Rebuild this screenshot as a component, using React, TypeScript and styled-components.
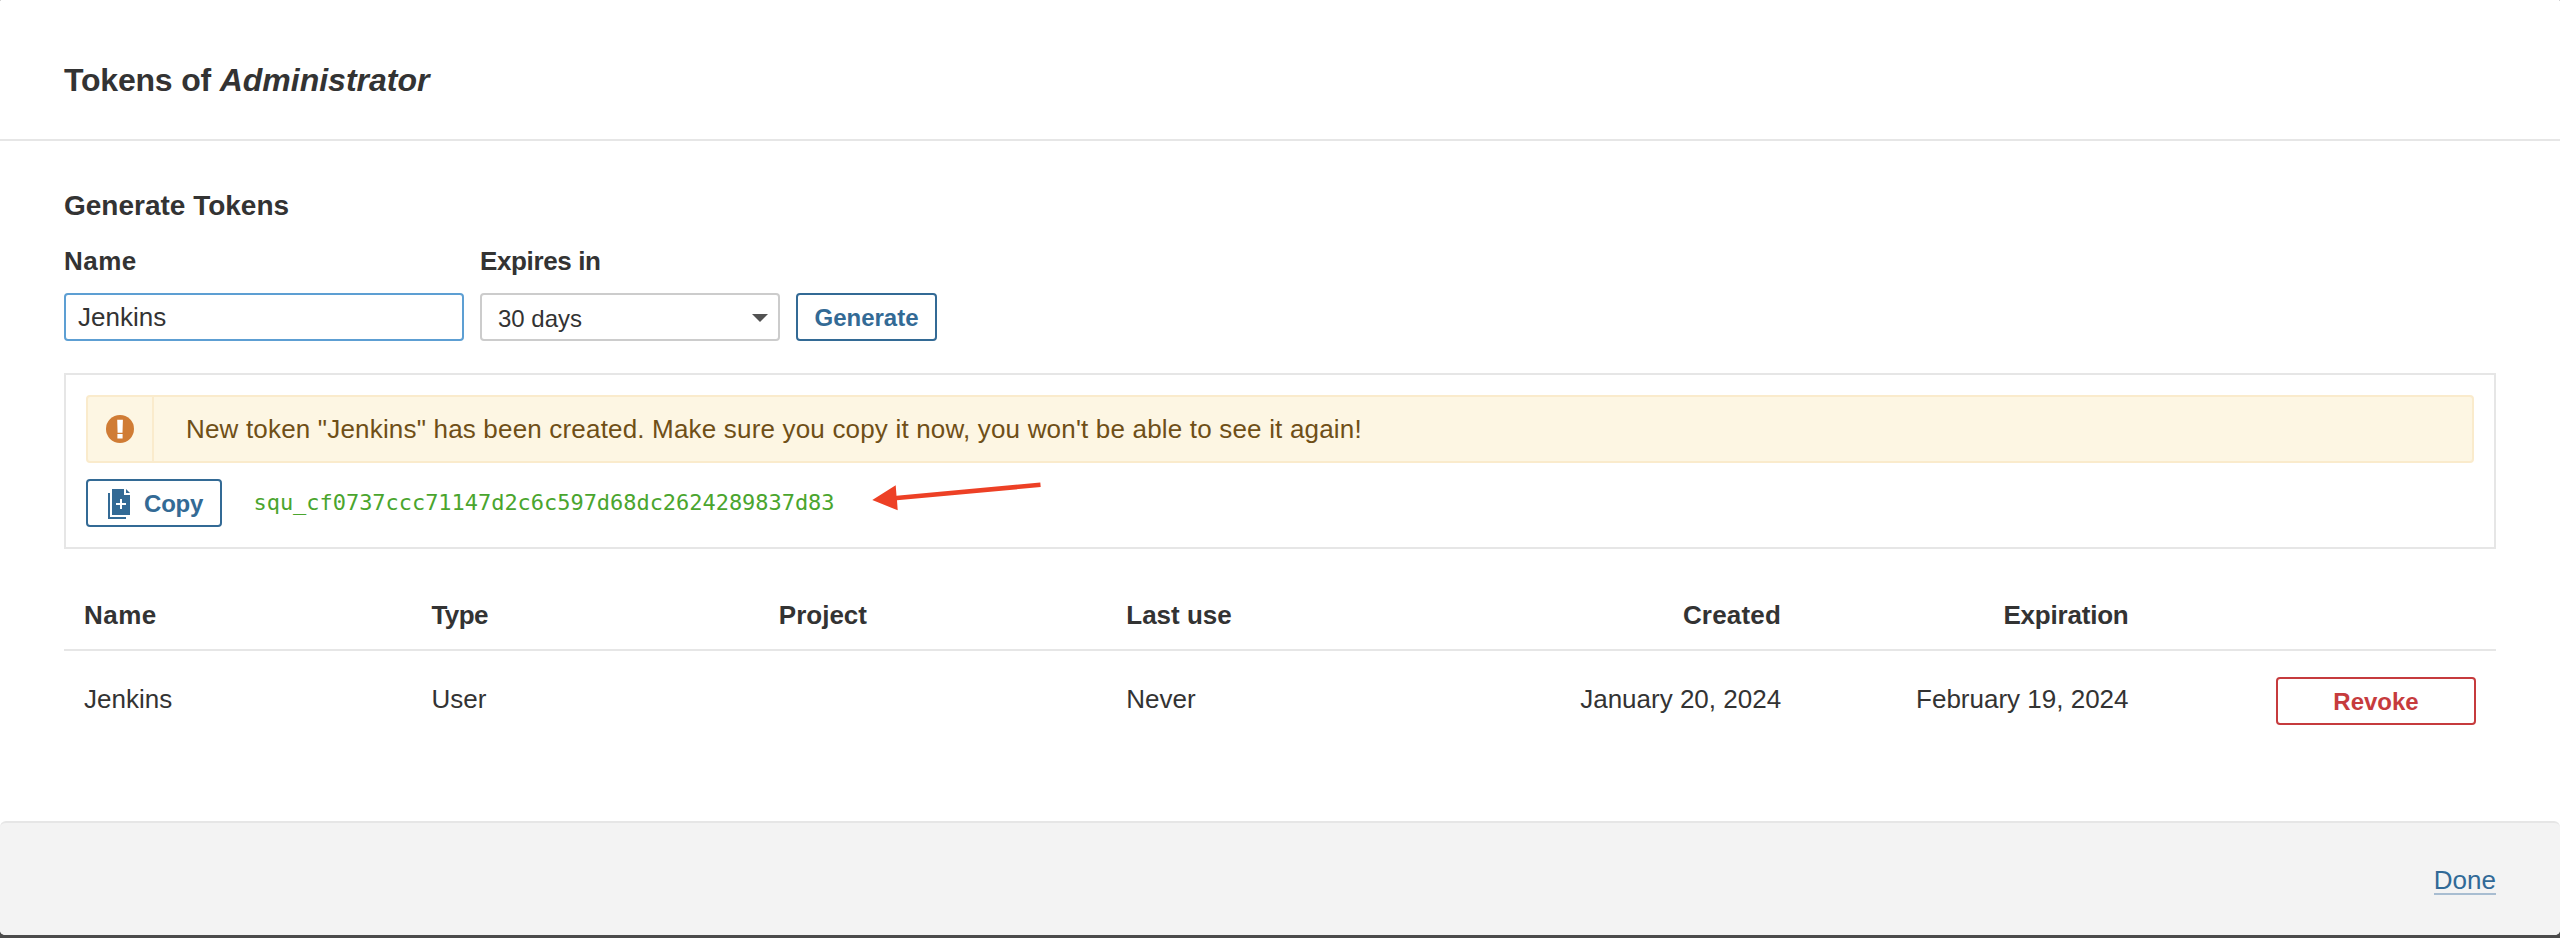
import React from "react";
import styled, { createGlobalStyle } from "styled-components";

const GlobalStyle = createGlobalStyle`
  *, *::before, *::after { box-sizing: border-box; }
  body {
    margin: 0;
    background: #4b4b4b;
    color: #333;
    font-family: "Liberation Sans", Arial, sans-serif;
    font-size: 26px;
    line-height: 30px;
  }
  button, input { font-family: inherit; margin: 0; }
`;

const Dialog = styled.div`
  display: flex;
  flex-direction: column;
  height: 935px;
  margin-bottom: 3px;
  background: #fff;
  border-radius: 1px 1px 5px 5px;
  overflow: hidden;
`;

const Header = styled.header`
  height: 141px;
  padding: 62px 64px 0;
  border-bottom: 2px solid #e6e6e6;
`;

const Title = styled.h1`
  margin: 0;
  font-size: 32px;
  line-height: 36px;
  letter-spacing: -0.2px;

  em { letter-spacing: 0; }
`;

const Body = styled.main`
  flex: 1;
  padding: 49px 64px 0;
`;

const SectionTitle = styled.h2`
  margin: 0 0 25px;
  font-size: 28px;
  line-height: 31px;
`;

const Form = styled.form`
  display: flex;
  align-items: flex-end;
  gap: 16px;
`;

const Field = styled.div<{ $width: number }>`
  display: flex;
  flex-direction: column;
  gap: 17px;
  width: ${(p) => p.$width}px;
`;

const Label = styled.label<{ $tracking: number }>`
  font-weight: bold;
  letter-spacing: ${(p) => p.$tracking}px;
`;

const TextInput = styled.input`
  width: 100%;
  height: 48px;
  padding: 0 12px;
  border: 2px solid #5d9fd3;
  border-radius: 4px;
  outline: none;
  background: #fff;
  color: #333;
  font-size: 26px;
  line-height: 44px;
`;

const Select = styled.div`
  display: flex;
  justify-content: space-between;
  height: 48px;
  padding: 3px 10px 0 16px;
  border: 2px solid #ccc;
  border-radius: 4px;
  font-size: 24px;
  line-height: 41px;
`;

const Caret = styled.span`
  width: 0;
  height: 0;
  margin-top: 16px;
  border: 8px solid transparent;
  border-top-color: #525252;
  border-bottom-width: 0;
`;

const Button = styled.button<{ $color: string; $width: number; $tracking?: number }>`
  display: flex;
  flex-shrink: 0;
  justify-content: center;
  gap: 14px;
  width: ${(p) => p.$width}px;
  height: 48px;
  padding: 1px 0 0;
  border: 2px solid ${(p) => p.$color};
  border-radius: 4px;
  background: #fff;
  color: ${(p) => p.$color};
  font-size: 24px;
  font-weight: bold;
  line-height: 43px;
  letter-spacing: ${(p) => p.$tracking ?? 0}px;
`;

const CopyButton = styled(Button)`
  justify-content: flex-start;
  padding-left: 20px;
`;

const ResultBox = styled.section`
  display: flex;
  flex-direction: column;
  gap: 16px;
  margin-top: 32px;
  padding: 20px;
  border: 2px solid #e6e6e6;
`;

const Alert = styled.div`
  display: flex;
  height: 68px;
  border: 2px solid #faebcc;
  border-radius: 4px;
  background: #fdf6e3;
  color: #6f4f17;
`;

const AlertIcon = styled.div`
  display: flex;
  align-items: center;
  justify-content: center;
  width: 66px;
  border-right: 2px solid #faebcc;
`;

const AlertText = styled.div`
  padding-left: 32px;
  line-height: 64px;
  letter-spacing: 0.18px;
`;

const TokenRow = styled.div`
  position: relative;
  display: flex;
`;

const Token = styled.code`
  margin-left: 31.5px;
  color: #4aa52e;
  font-family: "DejaVu Sans Mono", Menlo, monospace;
  font-size: 22px;
  line-height: 47px;
  letter-spacing: -0.04px;
`;

const Arrow = styled.svg`
  position: absolute;
  left: 784px;
  top: 1px;
`;

const CopyGlyph = styled.svg`
  margin-top: 7px;
`;

const Table = styled.table`
  width: 100%;
  margin-top: 51px;
  border-collapse: separate;
  border-spacing: 0;
  table-layout: fixed;
`;

const HeadCell = styled.th<{ $right?: boolean; $tracking?: number }>`
  padding: 0 20px 19px;
  border-bottom: 2px solid #e6e6e6;
  text-align: ${(p) => (p.$right ? "right" : "left")};
  letter-spacing: ${(p) => p.$tracking ?? 0}px;
`;

const Cell = styled.td<{ $right?: boolean }>`
  padding: 33px 20px 0;
  text-align: ${(p) => (p.$right ? "right" : "left")};
  vertical-align: top;
`;

const ActionCell = styled.td`
  padding: 26px 20px 0;

  button { margin-left: auto; }
`;

const Footer = styled.footer`
  display: flex;
  justify-content: flex-end;
  align-items: flex-start;
  height: 114px;
  padding: 44px 64px 0;
  border-top: 2px solid #e6e6e6;
  border-radius: 6px 6px 0 0;
  background: #f3f3f3;
`;

const DoneLink = styled.a`
  border-bottom: 2px solid #a8bdd1;
  color: #316a97;
  line-height: 26px;
`;

const BLUE = "#336a95";
const RED = "#c63b3d";

const columns = [
  { name: "Name", tracking: 0.5 },
  { name: "Type", tracking: -0.6 },
  { name: "Project" },
  { name: "Last use" },
  { name: "Created", right: true, tracking: 0.2 },
  { name: "Expiration", right: true, tracking: -0.2 },
  { name: "" },
];

const tokens = [
  {
    name: "Jenkins",
    type: "User",
    project: "",
    lastUse: "Never",
    created: "January 20, 2024",
    expiration: "February 19, 2024",
  },
];

function WarningIcon() {
  return (
    <svg width="28" height="28" viewBox="0 0 28 28">
      <circle cx="14" cy="14" r="14" fill="#d07c35" />
      <path d="M11.2 4.8h5.7l-.4 13h-4.9zM11.4 19h5.2v4.4h-5.2z" fill="#fff" />
    </svg>
  );
}

function CopyIcon() {
  return (
    <CopyGlyph width="22" height="30" viewBox="0 0 22 30">
      <path d="M0 4h2v24h16v2H0z" fill={BLUE} />
      <path d="M4 0h12v6h6v20H4z" fill={BLUE} />
      <path d="M18 0l4 4h-4z" fill={BLUE} />
      <path d="M12 10h2v4h4v2h-4v4h-2v-4H8v-2h4z" fill="#fff" />
    </CopyGlyph>
  );
}

function PointerArrow() {
  return (
    <Arrow width="174" height="34" viewBox="870 480 174 34">
      <path
        d="M872.3 500L895.7 485.3L896.5 495.7L1040.3 482.4L1040.7 487.1L897 500.3L897.7 510.3z"
        fill="#ed4025"
      />
    </Arrow>
  );
}

export default function App() {
  return (
    <>
      <GlobalStyle />
      <Dialog>
        <Header>
          <Title>
            Tokens of <em>Administrator</em>
          </Title>
        </Header>
        <Body>
          <SectionTitle>Generate Tokens</SectionTitle>
          <Form>
            <Field $width={400}>
              <Label $tracking={0.5} htmlFor="token-name">Name</Label>
              <TextInput id="token-name" value="Jenkins" readOnly />
            </Field>
            <Field $width={300}>
              <Label $tracking={-0.37}>Expires in</Label>
              <Select>
                30 days
                <Caret />
              </Select>
            </Field>
            <Button type="button" $color={BLUE} $width={141}>Generate</Button>
          </Form>
          <ResultBox>
            <Alert>
              <AlertIcon>
                <WarningIcon />
              </AlertIcon>
              <AlertText>
                New token "Jenkins" has been created. Make sure you copy it now, you won't be able to see it again!
              </AlertText>
            </Alert>
            <TokenRow>
              <CopyButton type="button" $color={BLUE} $width={136} $tracking={-0.2}>
                <CopyIcon />
                Copy
              </CopyButton>
              <Token>squ_cf0737ccc71147d2c6c597d68dc2624289837d83</Token>
              <PointerArrow />
            </TokenRow>
          </ResultBox>
          <Table>
            <thead>
              <tr>
                {columns.map((c) => (
                  <HeadCell key={c.name} $right={c.right} $tracking={c.tracking}>
                    {c.name}
                  </HeadCell>
                ))}
              </tr>
            </thead>
            <tbody>
              {tokens.map((t) => (
                <tr key={t.name}>
                  <Cell>{t.name}</Cell>
                  <Cell>{t.type}</Cell>
                  <Cell>{t.project}</Cell>
                  <Cell>{t.lastUse}</Cell>
                  <Cell $right>{t.created}</Cell>
                  <Cell $right>{t.expiration}</Cell>
                  <ActionCell>
                    <Button type="button" $color={RED} $width={200}>Revoke</Button>
                  </ActionCell>
                </tr>
              ))}
            </tbody>
          </Table>
        </Body>
        <Footer>
          <DoneLink>Done</DoneLink>
        </Footer>
      </Dialog>
    </>
  );
}
